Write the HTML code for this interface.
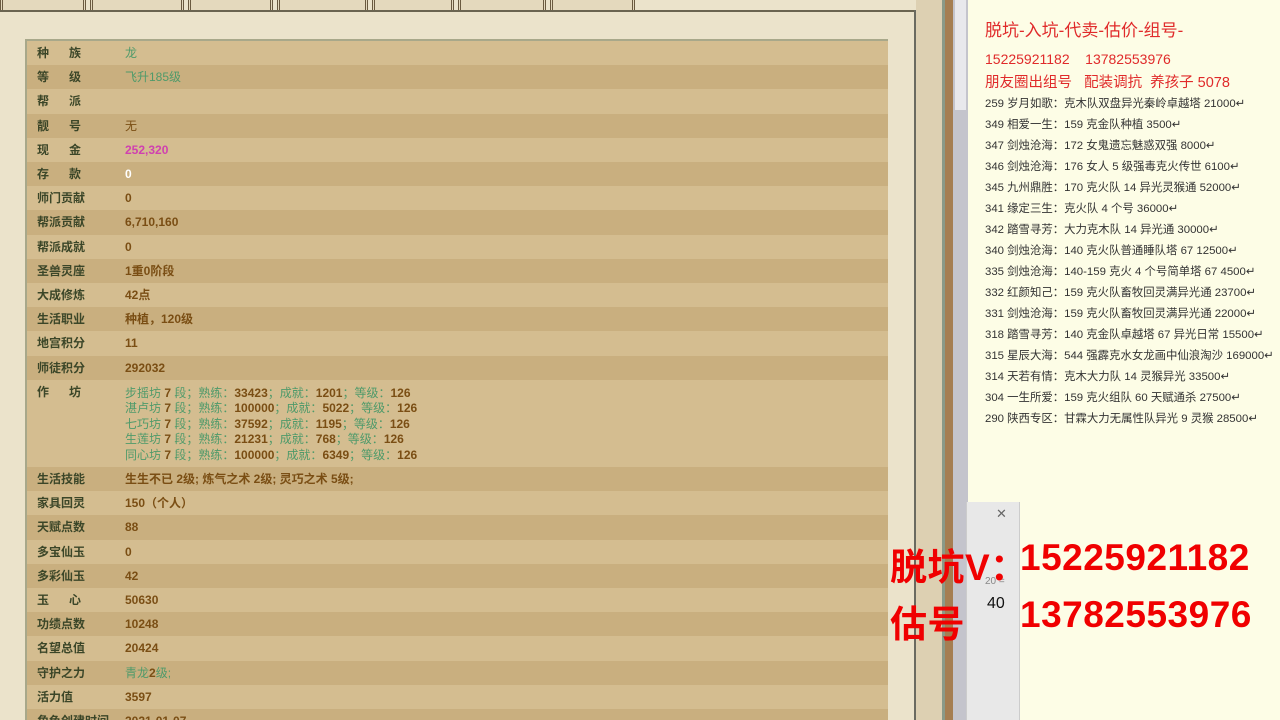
<!DOCTYPE html>
<html><head><meta charset="utf-8"><style>
*{margin:0;padding:0;box-sizing:border-box}
html,body{width:1280px;height:720px;overflow:hidden}
body{position:relative;background:#ebe3cb;font-family:"Liberation Sans","Noto Sans CJK SC",sans-serif}
.abs{position:absolute}
.tab{position:absolute;top:0;height:10px;background:#e4d9bd;border-left:3px double #6a5a40;border-right:3px double #6a5a40}
.panel{left:25px;top:39px;width:863px;height:681px;border:2px solid #a8a88a;border-right:none;border-bottom:none;background:#d2ba8c;overflow:hidden}
.row{position:absolute;left:0;width:861px;height:24.2px;font-size:12px;font-weight:bold;line-height:24px}
.row:nth-child(odd){background:#d4bd90}
.row:nth-child(even){background:#c9af7f}
.l{position:absolute;left:10px;color:#3b4628}
.v{position:absolute;left:98px;color:#7a4e14}
.g{color:#4f9a6a;font-weight:normal}
.p{color:#d040b0}
.w{color:#fff}
.doc{left:968px;top:0;width:312px;height:720px;background:#fdfde6}
.it{position:absolute;left:985px;font-size:11.4px;color:#333;white-space:nowrap}
.red{color:#e02a2a;position:absolute;white-space:nowrap}
.big{position:absolute;color:#f00000;font-weight:bold;font-size:37px;white-space:nowrap;letter-spacing:0.5px}
</style></head><body>
<div class="tab" style="left:0;width:86px"></div>
<div class="tab" style="left:90px;width:94px"></div>
<div class="tab" style="left:188px;width:85px"></div>
<div class="tab" style="left:277px;width:91px"></div>
<div class="tab" style="left:372px;width:82px"></div>
<div class="tab" style="left:458px;width:88px"></div>
<div class="tab" style="left:550px;width:85px"></div>
<div class="abs" style="left:0;top:10px;width:916px;height:2px;background:#6a6450"></div>
<div class="abs" style="left:914px;top:10px;width:2px;height:710px;background:#6a6a60"></div>
<div class="abs" style="left:916px;top:0;width:27px;height:720px;background:#ddd0b2"></div>
<div class="abs" style="left:942px;top:0;width:3px;height:720px;background:#8a9a88"></div>
<div class="abs" style="left:945px;top:0;width:8px;height:720px;background:#a57e52"></div>
<div class="abs" style="left:953px;top:0;width:15px;height:720px;background:#c4c4cc"></div>
<div class="abs" style="left:955px;top:0;width:11px;height:110px;background:#e8e8ec"></div>

<div class="abs panel">
<div class="row" style="top:0"><span class="l">种&nbsp;&nbsp;&nbsp;&nbsp;&nbsp;&nbsp;族</span><span class="v g">龙</span></div>
<div class="row" style="top:24.2px"><span class="l">等&nbsp;&nbsp;&nbsp;&nbsp;&nbsp;&nbsp;级</span><span class="v g">飞升185级</span></div>
<div class="row" style="top:48.4px"><span class="l">帮&nbsp;&nbsp;&nbsp;&nbsp;&nbsp;&nbsp;派</span></div>
<div class="row" style="top:72.6px"><span class="l">靓&nbsp;&nbsp;&nbsp;&nbsp;&nbsp;&nbsp;号</span><span class="v" style="font-weight:normal">无</span></div>
<div class="row" style="top:96.8px"><span class="l">现&nbsp;&nbsp;&nbsp;&nbsp;&nbsp;&nbsp;金</span><span class="v p">252,320</span></div>
<div class="row" style="top:121px"><span class="l">存&nbsp;&nbsp;&nbsp;&nbsp;&nbsp;&nbsp;款</span><span class="v w">0</span></div>
<div class="row" style="top:145.2px"><span class="l">师门贡献</span><span class="v">0</span></div>
<div class="row" style="top:169.4px"><span class="l">帮派贡献</span><span class="v">6,710,160</span></div>
<div class="row" style="top:193.6px"><span class="l">帮派成就</span><span class="v">0</span></div>
<div class="row" style="top:217.8px"><span class="l">圣兽灵座</span><span class="v">1重0阶段</span></div>
<div class="row" style="top:242px"><span class="l">大成修炼</span><span class="v">42点</span></div>
<div class="row" style="top:266.2px"><span class="l">生活职业</span><span class="v">种植，120级</span></div>
<div class="row" style="top:290.4px"><span class="l">地宫积分</span><span class="v">11</span></div>
<div class="row" style="top:314.6px"><span class="l">师徒积分</span><span class="v">292032</span></div>
<div class="row" style="top:338.8px;height:87px;background:#d4bd90"><span class="l">作&nbsp;&nbsp;&nbsp;&nbsp;&nbsp;&nbsp;坊</span>
<div class="v" style="top:6px;line-height:15.5px">
<div><span class="g">步摇坊</span> 7 <span class="g">段；熟练：</span>33423<span class="g">；成就：</span>1201<span class="g">；等级：</span>126</div>
<div><span class="g">湛卢坊</span> 7 <span class="g">段；熟练：</span>100000<span class="g">；成就：</span>5022<span class="g">；等级：</span>126</div>
<div><span class="g">七巧坊</span> 7 <span class="g">段；熟练：</span>37592<span class="g">；成就：</span>1195<span class="g">；等级：</span>126</div>
<div><span class="g">生莲坊</span> 7 <span class="g">段；熟练：</span>21231<span class="g">；成就：</span>768<span class="g">；等级：</span>126</div>
<div><span class="g">同心坊</span> 7 <span class="g">段；熟练：</span>100000<span class="g">；成就：</span>6349<span class="g">；等级：</span>126</div>
</div></div>
<div class="row" style="top:426px;background:#c9af7f"><span class="l">生活技能</span><span class="v">生生不已 2级; 炼气之术 2级; 灵巧之术 5级;</span></div>
<div class="row" style="top:450.2px;background:#d4bd90"><span class="l">家具回灵</span><span class="v">150（个人）</span></div>
<div class="row" style="top:474.4px;background:#c9af7f"><span class="l">天赋点数</span><span class="v">88</span></div>
<div class="row" style="top:498.6px;background:#d4bd90"><span class="l">多宝仙玉</span><span class="v">0</span></div>
<div class="row" style="top:522.8px;background:#c9af7f"><span class="l">多彩仙玉</span><span class="v">42</span></div>
<div class="row" style="top:547px;background:#d4bd90"><span class="l">玉&nbsp;&nbsp;&nbsp;&nbsp;&nbsp;&nbsp;心</span><span class="v">50630</span></div>
<div class="row" style="top:571.2px;background:#c9af7f"><span class="l">功绩点数</span><span class="v">10248</span></div>
<div class="row" style="top:595.4px;background:#d4bd90"><span class="l">名望总值</span><span class="v">20424</span></div>
<div class="row" style="top:619.6px;background:#c9af7f"><span class="l">守护之力</span><span class="v"><span class="g">青龙</span>2<span class="g">级;</span></span></div>
<div class="row" style="top:643.8px;background:#d4bd90"><span class="l">活力值</span><span class="v">3597</span></div>
<div class="row" style="top:668px;background:#c9af7f"><span class="l">角色创建时间</span><span class="v">2021-01-07</span></div>
</div>

<div class="abs doc"></div>
<div class="red" style="left:985px;top:16px;font-size:17px">脱坑-入坑-代卖-估价-组号-</div>
<div class="red" style="left:985px;top:51px;font-size:14px">15225921182&nbsp;&nbsp;&nbsp;&nbsp;13782553976</div>
<div class="red" style="left:985px;top:71px;font-size:14.5px">朋友圈出组号&nbsp;&nbsp;&nbsp;配装调抗&nbsp;&nbsp;养孩子 5078</div>
<div class="it" style="top:95px">259 岁月如歌：克木队双盘异光秦岭卓越塔 21000↵</div>
<div class="it" style="top:116px">349 相爱一生：159 克金队种植 3500↵</div>
<div class="it" style="top:137px">347 剑烛沧海：172 女鬼遗忘魅惑双强 8000↵</div>
<div class="it" style="top:158px">346 剑烛沧海：176 女人 5 级强毒克火传世 6100↵</div>
<div class="it" style="top:179px">345 九州鼎胜：170 克火队 14 异光灵猴通 52000↵</div>
<div class="it" style="top:200px">341 缘定三生：克火队 4 个号 36000↵</div>
<div class="it" style="top:221px">342 踏雪寻芳：大力克木队 14 异光通 30000↵</div>
<div class="it" style="top:242px">340 剑烛沧海：140 克火队普通睡队塔 67 12500↵</div>
<div class="it" style="top:263px">335 剑烛沧海：140-159 克火 4 个号简单塔 67 4500↵</div>
<div class="it" style="top:284px">332 红颜知己：159 克火队畜牧回灵满异光通 23700↵</div>
<div class="it" style="top:305px">331 剑烛沧海：159 克火队畜牧回灵满异光通 22000↵</div>
<div class="it" style="top:326px">318 踏雪寻芳：140 克金队卓越塔 67 异光日常 15500↵</div>
<div class="it" style="top:347px">315 星辰大海：544 强霹克水女龙画中仙浪淘沙 169000↵</div>
<div class="it" style="top:368px">314 天若有情：克木大力队 14 灵猴异光 33500↵</div>
<div class="it" style="top:389px">304 一生所爱：159 克火组队 60 天赋通杀 27500↵</div>
<div class="it" style="top:410px">290 陕西专区：甘霖大力无属性队异光 9 灵猴 28500↵</div>

<div class="abs" style="left:966px;top:502px;width:54px;height:218px;background:#e8e8e8;border-left:1px solid #ccc;border-right:1px solid #ccc"></div>
<div class="abs" style="left:996px;top:506px;font-size:13px;color:#666">✕</div>
<div class="abs" style="left:985px;top:576px;font-size:10px;color:#888">20 =</div>
<div class="abs" style="left:987px;top:595px;font-size:16px;color:#111">40</div>

<div class="big" style="left:890px;top:537px">脱坑V：</div>
<div class="big" style="left:1020px;top:537px">15225921182</div>
<div class="big" style="left:890px;top:594px">估号</div>
<div class="big" style="left:1020px;top:594px">13782553976</div>
</body></html>
